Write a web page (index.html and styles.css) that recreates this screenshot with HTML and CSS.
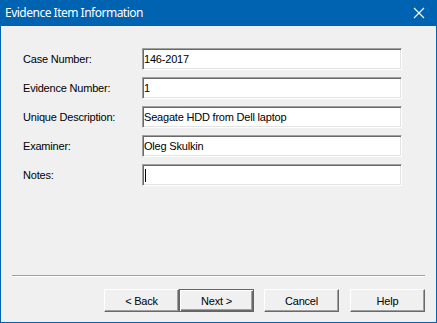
FILE: index.html
```html
<!DOCTYPE html>
<html lang="en">
<head>
    <meta charset="UTF-8">
    <title>Evidence Item Information</title>
    <link rel="stylesheet" href="styles.css">
</head>
<body>
    <div class="window">
        <div class="titlebar">
            <span class="title">Evidence Item Information</span>
            <svg class="close" width="12" height="12" viewBox="0 0 12 12">
                <path d="M1 1 L11 11 M11 1 L1 11" stroke="#ffffff" stroke-width="1.1" fill="none" />
            </svg>
        </div>
        <div class="content">
            <div class="form">
                <label>Case Number:</label>
                <div class="field">146-2017</div>
                <label>Evidence Number:</label>
                <div class="field">1</div>
                <label>Unique Description:</label>
                <div class="field">Seagate HDD from Dell laptop</div>
                <label>Examiner:</label>
                <div class="field">Oleg Skulkin</div>
                <label>Notes:</label>
                <div class="field"><span class="caret"></span></div>
            </div>
            <div class="footer">
                <div class="separator"></div>
                <div class="buttons">
                    <button class="btn">&lt; Back</button>
                    <button class="btn default">Next &gt;</button>
                    <button class="btn cancel">Cancel</button>
                    <button class="btn help">Help</button>
                </div>
            </div>
        </div>
    </div>
</body>
</html>
```

FILE: styles.css
```css
* {
    margin: 0;
    padding: 0;
    box-sizing: border-box;
}

body {
    background-color: #f0f0f0;
    font-family: "Liberation Sans", Arial, sans-serif;
    font-size: 11px;
    letter-spacing: -0.2px;
    color: #000000;
}

.window {
    width: 437px;
    height: 323px;
    border: 1px solid #0063b1;
    border-top: none;
    background-color: #f0f0f0;
    display: flex;
    flex-direction: column;
}

.titlebar {
    height: 26px;
    background-color: #0063b1;
    display: flex;
    align-items: center;
    justify-content: space-between;
    padding: 0 11px 1px 4px;
}

.title {
    color: #ffffff;
    font-family: "Noto Sans", "Open Sans", sans-serif;
    font-size: 12px;
    letter-spacing: -0.5px;
}

.content {
    flex: 1;
    display: flex;
    flex-direction: column;
}

.form {
    display: grid;
    grid-template-columns: 119px 260px;
    grid-auto-rows: 22px;
    row-gap: 7px;
    padding: 22px 0 0 22px;
}

.form label {
    display: flex;
    align-items: center;
    padding-bottom: 1px;
}

.field {
    background-color: #ffffff;
    border: 1px solid;
    border-color: #a0a0a0 #ffffff #ffffff #a0a0a0;
    box-shadow: inset 1px 1px #696969, inset -1px -1px #e3e3e3;
    padding: 0 1px;
    display: flex;
    align-items: center;
    white-space: nowrap;
}

.caret {
    display: block;
    width: 1px;
    height: 13px;
    background-color: #000000;
    margin-left: 1px;
}

.footer {
    margin-top: auto;
    padding: 0 11px 10px 11px;
}

.separator {
    border-top: 1px solid #a0a0a0;
    border-bottom: 1px solid #ffffff;
}

.buttons {
    display: flex;
    justify-content: flex-end;
    margin-top: 12px;
}

.btn {
    width: 75px;
    height: 23px;
    font-family: "Liberation Sans", Arial, sans-serif;
    font-size: 11px;
    letter-spacing: -0.2px;
    color: #000000;
    background-color: #f0f0f0;
    border: 1px solid;
    border-color: #ffffff #696969 #696969 #ffffff;
    box-shadow: inset -1px -1px #a0a0a0, inset 1px 1px #f0f0f0;
}

.btn.default {
    border-color: #646464;
    box-shadow: inset 1px 1px #ffffff, inset -1px -1px #696969, inset -2px -2px #a0a0a0;
}

.btn.cancel {
    margin-left: 10px;
}

.btn.help {
    margin-left: 11px;
}
```
